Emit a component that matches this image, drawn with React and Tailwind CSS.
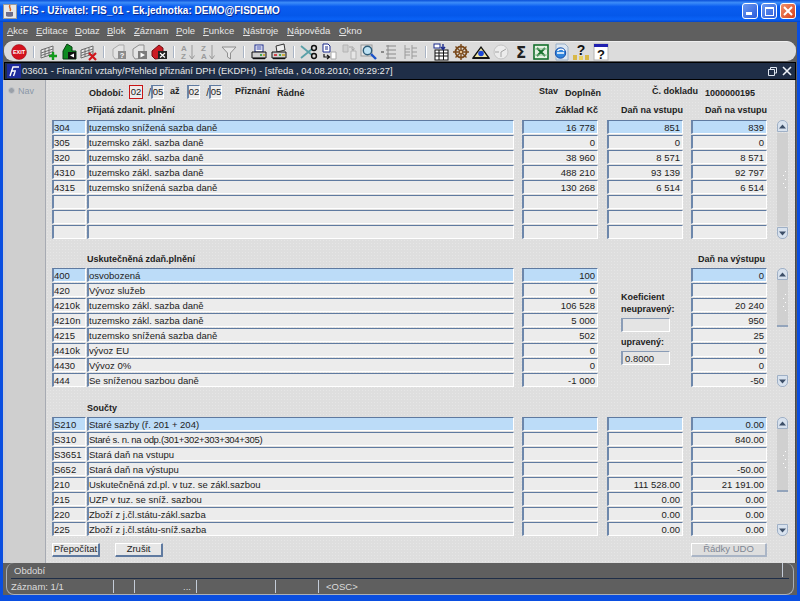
import React from "react";

const FONT = "font-['Liberation_Sans',Arial,sans-serif]";

const Ic = ({ children, w = 20 }) => (
  <div className={`h-[20px] flex items-center justify-center shrink-0 ${w === 22 ? "w-[22px]" : "w-[20px]"}`}>
    <svg width="18" height="18" viewBox="0 0 18 18" className="block">{children}</svg>
  </div>
);

const Sep = () => (
  <div className="w-[10px] h-[20px] flex items-center justify-center shrink-0">
    <div className="w-[2px] h-[12px] bg-[#a9b4c4] border-r border-white" />
  </div>
);

const Grid = ({ c = "#6d6d6d" }) => (
  <g fill="none" stroke={c} strokeWidth="1">
    <path d="M1 7 L13 3 L13 11 L1 15 Z" fill="#e8e8e8" />
    <path d="M1 10 L13 6 M1 12.5 L13 8.5 M5 5.8 V14 M9 4.5 V12.5" />
  </g>
);

const FileI = ({ c = "#a9a9a9" }) => (
  <path d="M3 6 L9 2 L14 2 L14 15 L5 16 L3 13 Z" fill="#e4e4e4" stroke={c} />
);

const Lines = ({ c = "#8a8a8a" }) => (
  <g stroke={c} fill="none">
    <path d="M6 3H16M6 7H16M6 11H16M6 15H16M8 2V16" />
  </g>
);

const icons = [
  <Ic key="exit">
    <circle cx="9" cy="9" r="7.5" fill="#d4121e" stroke="#8d0c14" strokeWidth="0.5" />
    <text x="9" y="11" textAnchor="middle" fontSize="5.5" fontWeight="700" fill="#fff" fontFamily="Liberation Sans">EXIT</text>
  </Ic>,
  <Sep key="s1" />,
  <Ic key="gridplus">
    <Grid />
    <path d="M9 13H17M13 9V17" stroke="#129a1c" strokeWidth="2.4" />
  </Ic>,
  <Ic key="house">
    <path d="M7 1 L12 4 L12 8 L16 8 L16 16 L3 16 L3 8 Z" fill="#0e8a20" stroke="#063f10" />
    <rect x="8" y="9" width="8" height="7" fill="#111" />
    <path d="M10 12.5 L14 10.5 V14.5 Z" fill="#fff" />
  </Ic>,
  <Ic key="gridx">
    <Grid />
    <path d="M9 10 L16 17 M16 10 L9 17" stroke="#d0161c" strokeWidth="2.2" />
  </Ic>,
  <Sep key="s2" />,
  <Ic key="fq">
    <FileI />
    <rect x="8" y="8" width="8" height="8" fill="#8c8c8c" />
    <text x="12" y="15" textAnchor="middle" fontSize="7.5" fontWeight="700" fill="#fff" fontFamily="Liberation Sans">?</text>
  </Ic>,
  <Ic key="fplay">
    <FileI c="#8d8d8d" />
    <rect x="8" y="8" width="9" height="8" fill="#7b7b7b" />
    <path d="M10.5 9.5 L15 12 L10.5 14.5 Z" fill="#fff" />
  </Ic>,
  <Ic key="fx">
    <path d="M2 8 L9 2 L13 5 L13 15 L5 16 L2 13 Z" fill="#cc1c24" stroke="#6e0f12" />
    <rect x="8" y="8" width="9" height="8" fill="#222" />
    <path d="M10 10 L15 14.5 M15 10 L10 14.5" stroke="#fff" strokeWidth="1.2" />
  </Ic>,
  <Sep key="s3" />,
  <Ic key="az">
    <text x="1" y="8" fontSize="8" fill="#9a9a9a" fontFamily="Liberation Sans" fontWeight="700">A</text>
    <text x="1" y="16" fontSize="8" fill="#9a9a9a" fontFamily="Liberation Sans" fontWeight="700">Z</text>
    <path d="M12 2V15M9.5 12.5L12 16L14.5 12.5" stroke="#9a9a9a" fill="none" />
  </Ic>,
  <Ic key="za">
    <text x="1" y="8" fontSize="8" fill="#9a9a9a" fontFamily="Liberation Sans" fontWeight="700">Z</text>
    <text x="1" y="16" fontSize="8" fill="#9a9a9a" fontFamily="Liberation Sans" fontWeight="700">A</text>
    <path d="M12 2V15M9.5 12.5L12 16L14.5 12.5" stroke="#9a9a9a" fill="none" />
  </Ic>,
  <Ic key="filter">
    <path d="M2 4H16L10.5 10V16L7.5 14V10Z" fill="#e6e6e6" stroke="#8f8f8f" />
  </Ic>,
  <Sep key="s4" />,
  <Ic key="print">
    <rect x="5" y="2" width="8" height="7" fill="#fff" stroke="#1b2a8c" />
    <path d="M6.5 4H11.5M6.5 6H11.5" stroke="#2a3aa8" />
    <path d="M2 9H16V15H2Z" fill="#cfcfcf" stroke="#111" />
    <path d="M3 15.5H15" stroke="#111" strokeWidth="1.4" />
    <path d="M10 12H12" stroke="#1a9a2a" strokeWidth="1.5" />
    <path d="M13 12H15" stroke="#c9a20e" strokeWidth="1.5" />
  </Ic>,
  <Ic key="print2">
    <path d="M6 3 L14 1 L15 7 L7 9 Z" fill="#eee" stroke="#333" />
    <path d="M2 9H16V15H2Z" fill="#cfcfcf" stroke="#111" />
    <path d="M3 15.5H15" stroke="#111" strokeWidth="1.4" />
    <path d="M4 12H7" stroke="#d0161c" strokeWidth="1.5" />
    <path d="M9 12H11" stroke="#1a9a2a" strokeWidth="1.5" />
    <path d="M12 12H15" stroke="#c9a20e" strokeWidth="1.5" />
  </Ic>,
  <Sep key="s5" />,
  <Ic key="scis">
    <path d="M1 3 L12 12 M1 15 L12 6" stroke="#5aa0a8" strokeWidth="1.8" />
    <circle cx="14" cy="5" r="2.4" fill="none" stroke="#111" strokeWidth="1.5" />
    <circle cx="14" cy="13" r="2.4" fill="none" stroke="#111" strokeWidth="1.5" />
  </Ic>,
  <Ic key="copy">
    <path d="M3 1H8L10 3V9H3Z" fill="#fff" stroke="#1b2a8c" />
    <path d="M5 4H8M5 6H8" stroke="#1b2a8c" />
    <path d="M11 9H16V16H11Z" fill="#fff" stroke="#a8a8a8" />
    <path d="M4 11V14H9M7 12L9.5 14L7 16" stroke="#111" fill="none" strokeWidth="1.2" />
  </Ic>,
  <Ic key="paste">
    <path d="M3 2H8V9H3Z" fill="#cfcfcf" stroke="#b4b4b4" />
    <path d="M11 8H16V16H11Z" fill="#e6e6e6" stroke="#b4b4b4" />
    <path d="M9 4H13V7M11.5 5.5L13 7.5L14.5 5.5" stroke="#a4a4a4" fill="none" />
  </Ic>,
  <Ic key="search">
    <rect x="1" y="2" width="11" height="11" fill="#e4e4e4" stroke="#9a9a9a" />
    <circle cx="7.5" cy="7.5" r="4.2" fill="#bfe3f4" stroke="#2e5c78" strokeWidth="1.4" />
    <path d="M11 11L16 16" stroke="#1a52c8" strokeWidth="2.4" />
  </Ic>,
  <Ic key="lines">
    <Lines />
    <path d="M1 9H4" stroke="#8a8a8a" strokeWidth="2" />
  </Ic>,
  <Ic key="cols" w={22}>
    <path d="M4 2V16M11 2V16M4 6H9M4 9H9M4 12H9M11 5H16M11 9H16M11 13H16" stroke="#9a9a9a" fill="none" />
  </Ic>,
  <Sep key="s6" />,
  <Ic key="calc">
    <rect x="3" y="7" width="13" height="10" fill="#fff" stroke="#111" />
    <path d="M3 10H16M3 13H16M7 7V17M11.5 7V17" stroke="#111" />
    <rect x="2" y="1" width="6" height="4" fill="#fff" stroke="#1b2a8c" />
    <path d="M11 1V6M9 4L11 6.5L13 4" stroke="#1b2a8c" fill="none" strokeWidth="1.4" />
  </Ic>,
  <Ic key="wheel">
    <circle cx="9" cy="9" r="5.5" fill="none" stroke="#7a4a1c" strokeWidth="1.8" />
    <path d="M9 1V17M1 9H17M3.5 3.5L14.5 14.5M14.5 3.5L3.5 14.5" stroke="#7a4a1c" strokeWidth="1.4" />
    <circle cx="9" cy="9" r="1.8" fill="#e4c090" stroke="#7a4a1c" />
  </Ic>,
  <Ic key="tri">
    <path d="M1 15 L9 4 L17 15 Z" fill="#f0e8a8" stroke="#111" strokeWidth="1.3" />
    <path d="M1 15H17" stroke="#111" strokeWidth="1.8" />
    <circle cx="9" cy="10.5" r="2.8" fill="#1c48d8" />
  </Ic>,
  <Ic key="clock">
    <circle cx="9" cy="9" r="7" fill="#ececec" stroke="#c4c4c4" />
    <path d="M9 9L14 6M9 9V14M3 9H7" stroke="#a4a4a4" />
  </Ic>,
  <Ic key="sigma">
    <text x="9" y="15" textAnchor="middle" fontSize="15" fontWeight="700" fill="#222" fontFamily="DejaVu Sans">Σ</text>
  </Ic>,
  <Ic key="excel">
    <rect x="2" y="2" width="14" height="14" fill="#e6f2e4" stroke="#15702c" strokeWidth="1.6" />
    <path d="M5 5L13 13M13 5L5 13" stroke="#15702c" strokeWidth="2" />
    <path d="M2.5 6H15.5M2.5 12H15.5" stroke="#8ec096" />
  </Ic>,
  <Ic key="ie">
    <path d="M4 1H13L16 4V17H4Z" fill="#dce6f0" stroke="#9ab0c8" />
    <circle cx="8.5" cy="10" r="5.2" fill="#2f84dc" stroke="#1a4fa8" />
    <path d="M5 10H12M5.5 8C7 5.5 11 5.5 12 8" stroke="#fff" fill="none" strokeWidth="1.3" />
  </Ic>,
  <Ic key="help1">
    <text x="9" y="12" textAnchor="middle" fontSize="14" fontWeight="700" fill="#111" fontFamily="Liberation Sans">?</text>
    <rect x="1" y="12" width="4" height="5" fill="#d8b848" />
    <rect x="7" y="13" width="4" height="4" fill="#e8d060" />
    <rect x="13" y="12" width="4" height="5" fill="#d8b848" />
  </Ic>,
  <Ic key="help2">
    <rect x="2" y="1" width="14" height="16" fill="#fff" stroke="#b4b4b4" />
    <rect x="2" y="1" width="14" height="3" fill="#2020b0" />
    <text x="9" y="16" textAnchor="middle" fontSize="13" fontWeight="700" fill="#111" fontFamily="Liberation Sans">?</text>
  </Ic>,
];

const menus = [
  ["A", "kce", "w-[29px]"], ["E", "ditace", "w-[39px]"], ["D", "otaz", "w-[32px]"], ["B", "lok", "w-[27px]"],
  ["Z", "áznam", "w-[42px]"], ["P", "ole", "w-[27px]"], ["F", "unkce", "w-[40px]"], ["N", "ástroje", "w-[44px]"],
  ["N", "ápověda", "w-[52px]"], ["O", "kno", "w-[24px]"],
];

const Cell = ({ text = "", active, right, w, tight }) => (
  <div
    className={`h-[14px] ${w} shrink-0 border-l-2 border-t border-l-[#6d87ab] border-t-[#5f7aa0] border-r border-b border-r-white border-b-white overflow-hidden whitespace-nowrap text-[9.5px] leading-[13px] text-[#222] ${
      active ? "bg-[#bcdcf8]" : "bg-[#ececec]"
    } ${right ? "text-right pr-[2px]" : "text-left"} ${tight ? "tracking-[-0.3px]" : ""}`}
  >
    {text}
  </div>
);

const Arrow = ({ up }) => (
  <div className={`w-[11px] h-[12px] shrink-0 bg-[#d8e2ee] border border-[#9fb0c6] flex items-center justify-center ${up ? "rounded-t-[5px]" : "rounded-b-[5px]"}`}>
    <svg width="7" height="5" viewBox="0 0 7 5" className="block">
      <path d={up ? "M0 4.5H7L3.5 0.5Z" : "M0 0.5H7L3.5 4.5Z"} fill="#3d4f68" />
    </svg>
  </div>
);

const Dots = () => (
  <div className="flex flex-col gap-[3px] items-end pr-[2px]">
    {[0, 1, 2, 3, 4].map((i) => (
      <div key={i} className="flex gap-[2px] justify-end">
        {i % 2 === 0 ? <div className="w-[1px] h-[1px] bg-white" /> : <div className="w-[1px] h-[1px] bg-white mr-[2px]" />}
      </div>
    ))}
  </div>
);

const Scroll = ({ thumb }) => (
  <div className="w-[11px] h-[119px] ml-[10px] flex flex-col shrink-0">
    <Arrow up />
    {thumb === "full" ? (
      <div className="flex-1 bg-[#d0d0d0] flex flex-col justify-center my-[1px]">
        <Dots />
      </div>
    ) : (
      <>
        <div className={`${thumb} bg-[#d0d0d0] border-b-2 border-b-[#93a4bb] flex flex-col justify-center`}>
          <Dots />
        </div>
        <div className="flex-1" />
      </>
    )}
    <Arrow />
  </div>
);

const Table = ({ rows, middle, thumb }) => (
  <div className="flex pl-[6px]">
    <div className="flex flex-col gap-[1px] w-[35px] shrink-0">
      {rows.map((r, i) => <Cell key={i} w="w-[34px]" text={r[0]} active={i === 0} />)}
    </div>
    <div className="flex flex-col gap-[1px] w-[435px] shrink-0">
      {rows.map((r, i) => <Cell key={i} w="w-[427px]" text={r[1]} active={i === 0} tight={r[1].includes("301+")} />)}
    </div>
    <div className="flex flex-col gap-[1px] w-[85px] shrink-0">
      {rows.map((r, i) => <Cell key={i} w="w-[76px]" right text={r[2]} active={i === 0} />)}
    </div>
    {middle ? (
      <div className="w-[84px] shrink-0">{middle}</div>
    ) : (
      <div className="flex flex-col gap-[1px] w-[84px] shrink-0">
        {rows.map((r, i) => <Cell key={i} w="w-[76px]" right text={r[3]} active={i === 0} />)}
      </div>
    )}
    <div className="flex flex-col gap-[1px] w-[76px] shrink-0">
      {rows.map((r, i) => <Cell key={i} w="w-[76px]" right text={r[4]} active={i === 0} />)}
    </div>
    <Scroll thumb={thumb} />
  </div>
);

const Label = ({ children, className = "" }) => (
  <div className={`text-[9px] font-bold text-[#222] whitespace-nowrap ${className}`}>{children}</div>
);

const sec1 = [
  ["304", "tuzemsko snížená sazba daně", "16 778", "851", "839"],
  ["305", "tuzemsko zákl. sazba daně", "0", "0", "0"],
  ["320", "tuzemsko zákl. sazba daně", "38 960", "8 571", "8 571"],
  ["4310", "tuzemsko zákl. sazba daně", "488 210", "93 139", "92 797"],
  ["4315", "tuzemsko snížená sazba daně", "130 268", "6 514", "6 514"],
  ["", "", "", "", ""],
  ["", "", "", "", ""],
  ["", "", "", "", ""],
];
const sec2 = [
  ["400", "osvobozená", "100", "", "0"],
  ["420", "Vývoz služeb", "0", "", ""],
  ["4210k", "tuzemsko zákl. sazba daně", "106 528", "", "20 240"],
  ["4210n", "tuzemsko zákl. sazba daně", "5 000", "", "950"],
  ["4215", "tuzemsko snížená sazba daně", "502", "", "25"],
  ["4410k", "vývoz EU", "0", "", "0"],
  ["4430", "Vývoz 0%", "0", "", "0"],
  ["444", "Se sníženou sazbou daně", "-1 000", "", "-50"],
];
const sec3 = [
  ["S210", "Staré sazby (ř. 201 + 204)", "", "", "0.00"],
  ["S310", "Staré s. n. na odp.(301+302+303+304+305)", "", "", "840.00"],
  ["S3651", "Stará daň na vstupu", "", "", ""],
  ["S652", "Stará daň na výstupu", "", "", "-50.00"],
  ["210", "Uskutečněná zd.pl. v tuz. se zákl.sazbou", "", "111 528.00", "21 191.00"],
  ["215", "UZP v tuz. se sníž. sazbou", "", "0.00", "0.00"],
  ["220", "Zboží z j.čl.státu-zákl.sazba", "", "0.00", "0.00"],
  ["225", "Zboží z j.čl.státu-sníž.sazba", "", "0.00", "0.00"],
];

const Small = ({ text, red, w = "w-[13px]" }) => (
  <div className={`${w} h-[14px] flex items-center justify-center text-[9.5px] text-[#222] ${red ? "border border-[#c81414] bg-[#ececec]" : "border-l-2 border-t border-l-[#6d87ab] border-t-[#5f7aa0] border-r border-b border-r-white border-b-white bg-[#ececec]"}`}>
    {text}
  </div>
);

const Btn = ({ children, w, disabled }) => (
  <div className={`${w} h-[14px] flex items-center justify-center text-[9.5px] rounded-[1px] border-r-2 border-b-2 border-t border-l ${disabled ? "text-[#7e8794] bg-[#dedede] border-r-[#aab5c6] border-b-[#aab5c6] border-t-white border-l-white" : "text-[#222] bg-[#e6e6e6] border-r-[#5f7aa0] border-b-[#5f7aa0] border-t-white border-l-white"}`}>
    {children}
  </div>
);

export default function App() {
  return (
    <div className={`w-[800px] h-[601px] overflow-hidden flex flex-col bg-[#0a4ee0] ${FONT}`}>
      {/* XP title bar */}
      <div className="h-[22px] shrink-0 flex items-center pl-[3px] pr-[4px] bg-[linear-gradient(180deg,#0a4fd8_0%,#3c8cf8_12%,#0a5df0_30%,#0558ea_70%,#0a62f6_88%,#0344c8_100%)]">
        <svg width="14" height="15" viewBox="0 0 14 15" className="block shrink-0">
          <rect x="0.5" y="0.5" width="13" height="14" fill="#e8e8e8" stroke="#9a9a9a" />
          <path d="M3 8H10V12C10 13 3 13 3 12Z" fill="#6d6d8a" />
          <path d="M7 1C5 4 9 4 7 7" stroke="#d9641c" strokeWidth="1.5" fill="none" />
        </svg>
        <div className="ml-[3px] text-white font-bold text-[10px] leading-none whitespace-nowrap [text-shadow:1px_1px_0_#0a2a90]">
          iFIS - Uživatel: FIS_01 - Ek.jednotka: DEMO@FISDEMO
        </div>
        <div className="ml-auto flex gap-[3px]">
          <div className="w-[16px] h-[16px] rounded-[3px] border border-white bg-[linear-gradient(135deg,#6a98f0,#2a5cdc)] flex items-end pl-[3px] pb-[3px]">
            <div className="w-[6px] h-[3px] bg-white" />
          </div>
          <div className="w-[16px] h-[16px] rounded-[3px] border border-white bg-[linear-gradient(135deg,#6a98f0,#2a5cdc)] flex items-center justify-center">
            <div className="w-[9px] h-[9px] border border-white border-t-2" />
          </div>
          <div className="w-[16px] h-[16px] rounded-[3px] border border-white bg-[linear-gradient(135deg,#f0906a,#d8401c)] flex items-center justify-center">
            <svg width="10" height="10" viewBox="0 0 10 10" className="block"><path d="M1 1L9 9M9 1L1 9" stroke="#fff" strokeWidth="2" /></svg>
          </div>
        </div>
      </div>

      {/* Body between blue edges */}
      <div className="flex-1 mx-[3px] bg-[#5f5f5f] flex flex-col min-h-0">
        {/* Menu */}
        <div className="h-[19px] shrink-0 flex items-center pl-[4px] text-[9.5px] text-[#e6e6e6]">
          {menus.map(([a, b, w], i) => (
            <div key={i} className={`${w} shrink-0 whitespace-nowrap`}>
              <span className="underline">{a}</span>{b}
            </div>
          ))}
        </div>
        {/* Toolbar */}
        <div className="h-[20px] shrink-0 mx-[1px] rounded-[9px] bg-[#dcdcdc] border-t border-[#efefef] flex items-center pl-[5px]">
          {icons}
        </div>
        {/* Inner title */}
        <div className="mt-[1px] h-[18px] shrink-0 mx-[1px] bg-[#1f2e47] border border-black flex items-center pl-[2px] pr-[3px]">
          <div className="w-[14px] h-[14px] bg-white flex items-center justify-center shrink-0">
            <svg width="14" height="14" viewBox="0 0 14 14" className="block">
              <rect width="14" height="14" fill="#1d2b9c" />
              <path d="M3 12L6 3H12M4 7H9M8 8L6.5 12" stroke="#fff" strokeWidth="1.4" fill="none" />
            </svg>
          </div>
          <div className="ml-[1px] text-[9.4px] text-[#e8e8e8] whitespace-nowrap">
            03601 - Finanční vztahy/Přehled přiznání DPH (EKDPH) - [středa , 04.08.2010; 09:29:27]
          </div>
          <div className="ml-auto flex items-center gap-[4px]">
            <svg width="9" height="9" viewBox="0 0 9 9" className="block"><path d="M2.5 2.5V.5H8.5V6H6.5M.5 2.5H6.5V8.5H.5Z" fill="none" stroke="#dfe6f0" /></svg>
            <svg width="10" height="10" viewBox="0 0 10 10" className="block ml-[1px]"><path d="M1 1L9 9M9 1L1 9" stroke="#eef2f8" strokeWidth="1.6" /></svg>
          </div>
        </div>

        {/* Content */}
        <div className="h-[483px] shrink-0 flex">
          <div className="w-[3px] bg-[#c8ccd4] shrink-0" />
          <div className="w-[40px] shrink-0 bg-[#cfcfcf] border-r border-[#a7abb3] pt-[5px] pl-[2px] flex items-start gap-[3px] text-[9px] text-[#8a97a8]">
            <div className="w-[7px] h-[7px] mt-[2px] rounded-full bg-[#9aa0a8] border border-[#c2c6cc]" />
            <span className="leading-[12px]">Nav</span>
          </div>
          <div className="w-[750px] shrink-0 bg-[#dedede] bg-[radial-gradient(#e6e6e6_0.6px,transparent_0.6px)] bg-[length:3px_3px] border-r border-[#4a4a4a] flex flex-col pt-[5px]">
            {/* header */}
            <div className="h-[14px] flex items-center shrink-0 pl-[43px]">
              <Label className="mt-[4px] w-[40px]">Období:</Label>
              <Small text="02" red w="w-[14px]" />
              <span className="w-[8px] text-[10px] text-right text-[#222]">/</span>
              <Small text="05" />
              <Label className="ml-[6px] w-[17px]">až</Label>
              <Small text="02" />
              <span className="w-[9px] text-[10px] text-right text-[#222]">/</span>
              <Small text="05" />
              <Label className="ml-[13px] w-[42px]">Přiznání</Label>
              <Label className="mt-[3px] w-[262px]">Řádné</Label>
              <Label className="w-[26px]">Stav</Label>
              <Label className="mt-[3px] w-[87px]">Doplněn</Label>
              <Label className="w-[53px]">Č. dokladu</Label>
              <Label className="mt-[3px]">1000000195</Label>
            </div>
            {/* heading 1 */}
            <div className="h-[21px] shrink-0 flex items-center">
              <Label className="ml-[41px] w-[437px] mt-[3px]">Přijatá zdanit. plnění</Label>
              <Label className="w-[74px] text-right mt-[3px]">Základ Kč</Label>
              <Label className="w-[85px] text-right mt-[3px]">Daň na vstupu</Label>
              <Label className="w-[84px] text-right mt-[3px]">Daň na vstupu</Label>
            </div>
            <Table rows={sec1} thumb="full" />
            {/* heading 2 */}
            <div className="h-[29px] shrink-0 flex items-center pt-[13px]">
              <Label className="ml-[41px] w-[611px]">Uskutečněná zdaň.plnění</Label>
              <Label>Daň na výstupu</Label>
            </div>
            <Table
              rows={sec2}
              thumb="h-[47px]"
              middle={
                <div className="flex flex-col pt-[23px] pl-[14px]">
                  <Label className="leading-[12px]">Koeficient</Label>
                  <Label className="leading-[12px]">neupravený:</Label>
                  <div className="mt-[3px] w-[49px] h-[14px] bg-[#e4e4e4] border-l-2 border-t border-l-[#8a9cb6] border-t-[#8a9cb6] border-r border-b border-r-white border-b-white" />
                  <Label className="leading-[12px] mt-[4px]">upravený:</Label>
                  <div className="mt-[3px] w-[49px] h-[14px] bg-[#e4e4e4] border-l-2 border-t border-l-[#8a9cb6] border-t-[#8a9cb6] border-r border-b border-r-white border-b-white text-[9.5px] leading-[13px] pl-[2px] text-[#222]">0.8000</div>
                </div>
              }
            />
            {/* heading 3 */}
            <div className="h-[30px] shrink-0 flex items-center pt-[14px]">
              <Label className="ml-[41px]">Součty</Label>
            </div>
            <Table rows={sec3} thumb="h-[63px]" />
            {/* Buttons */}
            <div className="mt-[7px] flex pl-[6px]">
              <Btn w="w-[48px]">Přepočítat</Btn>
              <div className="w-[15px]" />
              <Btn w="w-[48px]">Zrušit</Btn>
              <div className="w-[528px]" />
              <Btn w="w-[76px]" disabled>Řádky UDO</Btn>
            </div>
          </div>
        </div>

        {/* Status */}
        <div className="h-[32px] shrink-0 mx-[3px] border-x border-b border-[#aab0b8] rounded-[8px] flex flex-col px-[4px] text-[9.5px] text-[#dcdcdc]">
          <div className="h-[16px] flex items-end pb-[1px] border-b border-[#1f2e47] pl-[3px]">
            <span className="leading-[12px]">Období</span>
            <div className="ml-auto mr-[6px] w-[1px] h-[14px] bg-[#c4ccd8]" />
          </div>
          <div className="flex-1 flex items-center">
            <div className="w-[103px] border-r border-[#c4ccd8] h-[13px] leading-[13px]">Záznam: 1/1</div>
            <div className="w-[21px] border-r border-[#c4ccd8] h-[13px]" />
            <div className="w-[62px] border-r border-[#c4ccd8] h-[13px] leading-[13px] text-right pr-[5px]">...</div>
            <div className="w-[79px] border-r border-[#c4ccd8] h-[13px]" />
            <div className="w-[43px] border-r border-[#c4ccd8] h-[13px]" />
            <div className="pl-[7px] leading-[13px]">&lt;OSC&gt;</div>
          </div>
        </div>
      </div>
      <div className="h-[6px] shrink-0" />
    </div>
  );
}
